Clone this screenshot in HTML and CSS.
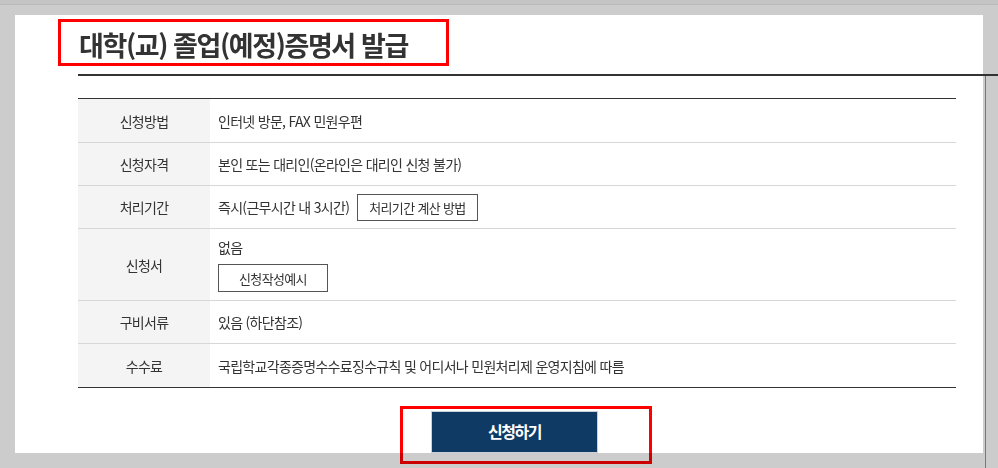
FILE: index.html
```html
<!DOCTYPE html>
<html lang="ko">
<head>
<meta charset="utf-8">
<title>대학(교) 졸업(예정)증명서 발급</title>
<link rel="stylesheet" href="styles.css">
</head>
<body>
<div class="topbar"></div>
<div class="stage">
  <main class="panel">
    <header class="title-wrap">
      <h1 class="title">대학(교) 졸업(예정)증명서 발급</h1>
      <span class="mark mark-title"></span>
    </header>
    <div class="rule"></div>
    <div class="info">
      <div class="row r44">
        <div class="k">신청방법</div>
        <div class="v">인터넷 방문, FAX 민원우편</div>
      </div>
      <div class="row r43">
        <div class="k">신청자격</div>
        <div class="v">본인 또는 대리인(온라인은 대리인 신청 불가)</div>
      </div>
      <div class="row r43">
        <div class="k">처리기간</div>
        <div class="v">즉시(근무시간 내 3시간) <button class="btn-line btn-calc">처리기간 계산 방법</button></div>
      </div>
      <div class="row r72">
        <div class="k">신청서</div>
        <div class="v v-stack">
          <span class="stack-text">없음</span>
          <button class="btn-line btn-sample">신청작성예시</button>
        </div>
      </div>
      <div class="row r43">
        <div class="k">구비서류</div>
        <div class="v">있음 (하단참조)</div>
      </div>
      <div class="row r43 last">
        <div class="k">수수료</div>
        <div class="v">국립학교각종증명수수료징수규칙 및 어디서나 민원처리제 운영지침에 따름</div>
      </div>
    </div>
    <div class="actions">
      <button class="submit">신청하기</button>
      <span class="mark mark-submit"></span>
    </div>
  </main>
  <aside class="gutter"><div class="gutter-line"></div></aside>
</div>
</body>
</html>
```
FILE: styles.css
```css
html, body {
  margin: 0;
  height: 468px;
  overflow: hidden;
}
body {
  background: #cccccc;
  font-family: "Noto Sans CJK KR", "Noto Sans", sans-serif;
  color: #333333;
}
.topbar {
  height: 4px;
  background: #c4c4c4;
  border-bottom: 1px solid #bababa;
}
.stage {
  display: flex;
  padding: 10px 0 0 15px;
}
.panel {
  flex: none;
  width: 968px;
  height: 438px;
  background: #ffffff;
  position: relative;
}
.gutter {
  flex: none;
  width: 15px;
  padding-left: 2px;
  box-sizing: border-box;
}
.gutter-line {
  margin-top: 61px;
  height: 392px;
  border-left: 1px solid #777777;
}
.title-wrap {
  position: relative;
  height: 59px;
  padding-left: 64px;
  box-sizing: border-box;
}
.title {
  margin: 0;
  padding-top: 12px;
  font-size: 27px;
  line-height: 36px;
  font-weight: 700;
  letter-spacing: -1.4px;
  color: #333333;
}
.rule {
  height: 2px;
  background: #333333;
  margin-left: 63px;
  margin-right: -15px;
}
.info {
  margin: 22px 0 0 63px;
  width: 878px;
  border-top: 1px solid #333333;
  border-bottom: 1px solid #333333;
  font-size: 14px;
  letter-spacing: -0.05em;
}
.row {
  display: grid;
  grid-template-columns: 132px 1fr;
  box-sizing: border-box;
  border-bottom: 1px solid #d7d7d7;
}
.row.last {
  border-bottom: none;
}
.r44 { height: 44px; }
.r43 { height: 43px; }
.r72 { height: 72px; }
.k {
  background: #f4f4f4;
  display: flex;
  align-items: center;
  justify-content: center;
}
.v {
  display: flex;
  align-items: center;
  padding-left: 8px;
}
.v-stack {
  flex-direction: column;
  align-items: flex-start;
  justify-content: center;
}
.stack-text {
  line-height: 20px;
}
.btn-line {
  display: inline-flex;
  align-items: center;
  justify-content: center;
  box-sizing: border-box;
  background: #ffffff;
  border: 1px solid #555555;
  font-family: inherit;
  font-size: 13px;
  letter-spacing: -0.05em;
  color: #333333;
  padding: 0 11px;
  margin: 0;
}
.btn-calc {
  height: 27px;
  margin-left: 8px;
}
.btn-sample {
  width: 110px;
  height: 28px;
  margin-top: 7px;
}
.actions {
  position: relative;
  margin: 23px 0 0 63px;
  width: 878px;
  display: flex;
  justify-content: center;
  padding-right: 5px;
  box-sizing: border-box;
}
.submit {
  width: 167px;
  height: 42px;
  background: #0f3a63;
  border: 1px solid #c9d1da;
  color: #ffffff;
  font-family: inherit;
  font-weight: 700;
  font-size: 16px;
  letter-spacing: -1.5px;
  padding: 0 0 2px;
}
.mark {
  position: absolute;
  box-sizing: border-box;
  border: 3px solid #ff0000;
  mix-blend-mode: multiply;
  pointer-events: none;
}
.mark-title {
  left: 43px;
  top: 4px;
  width: 391px;
  height: 47px;
}
.mark-submit {
  left: 322px;
  top: -5px;
  width: 252px;
  height: 58px;
}
```
